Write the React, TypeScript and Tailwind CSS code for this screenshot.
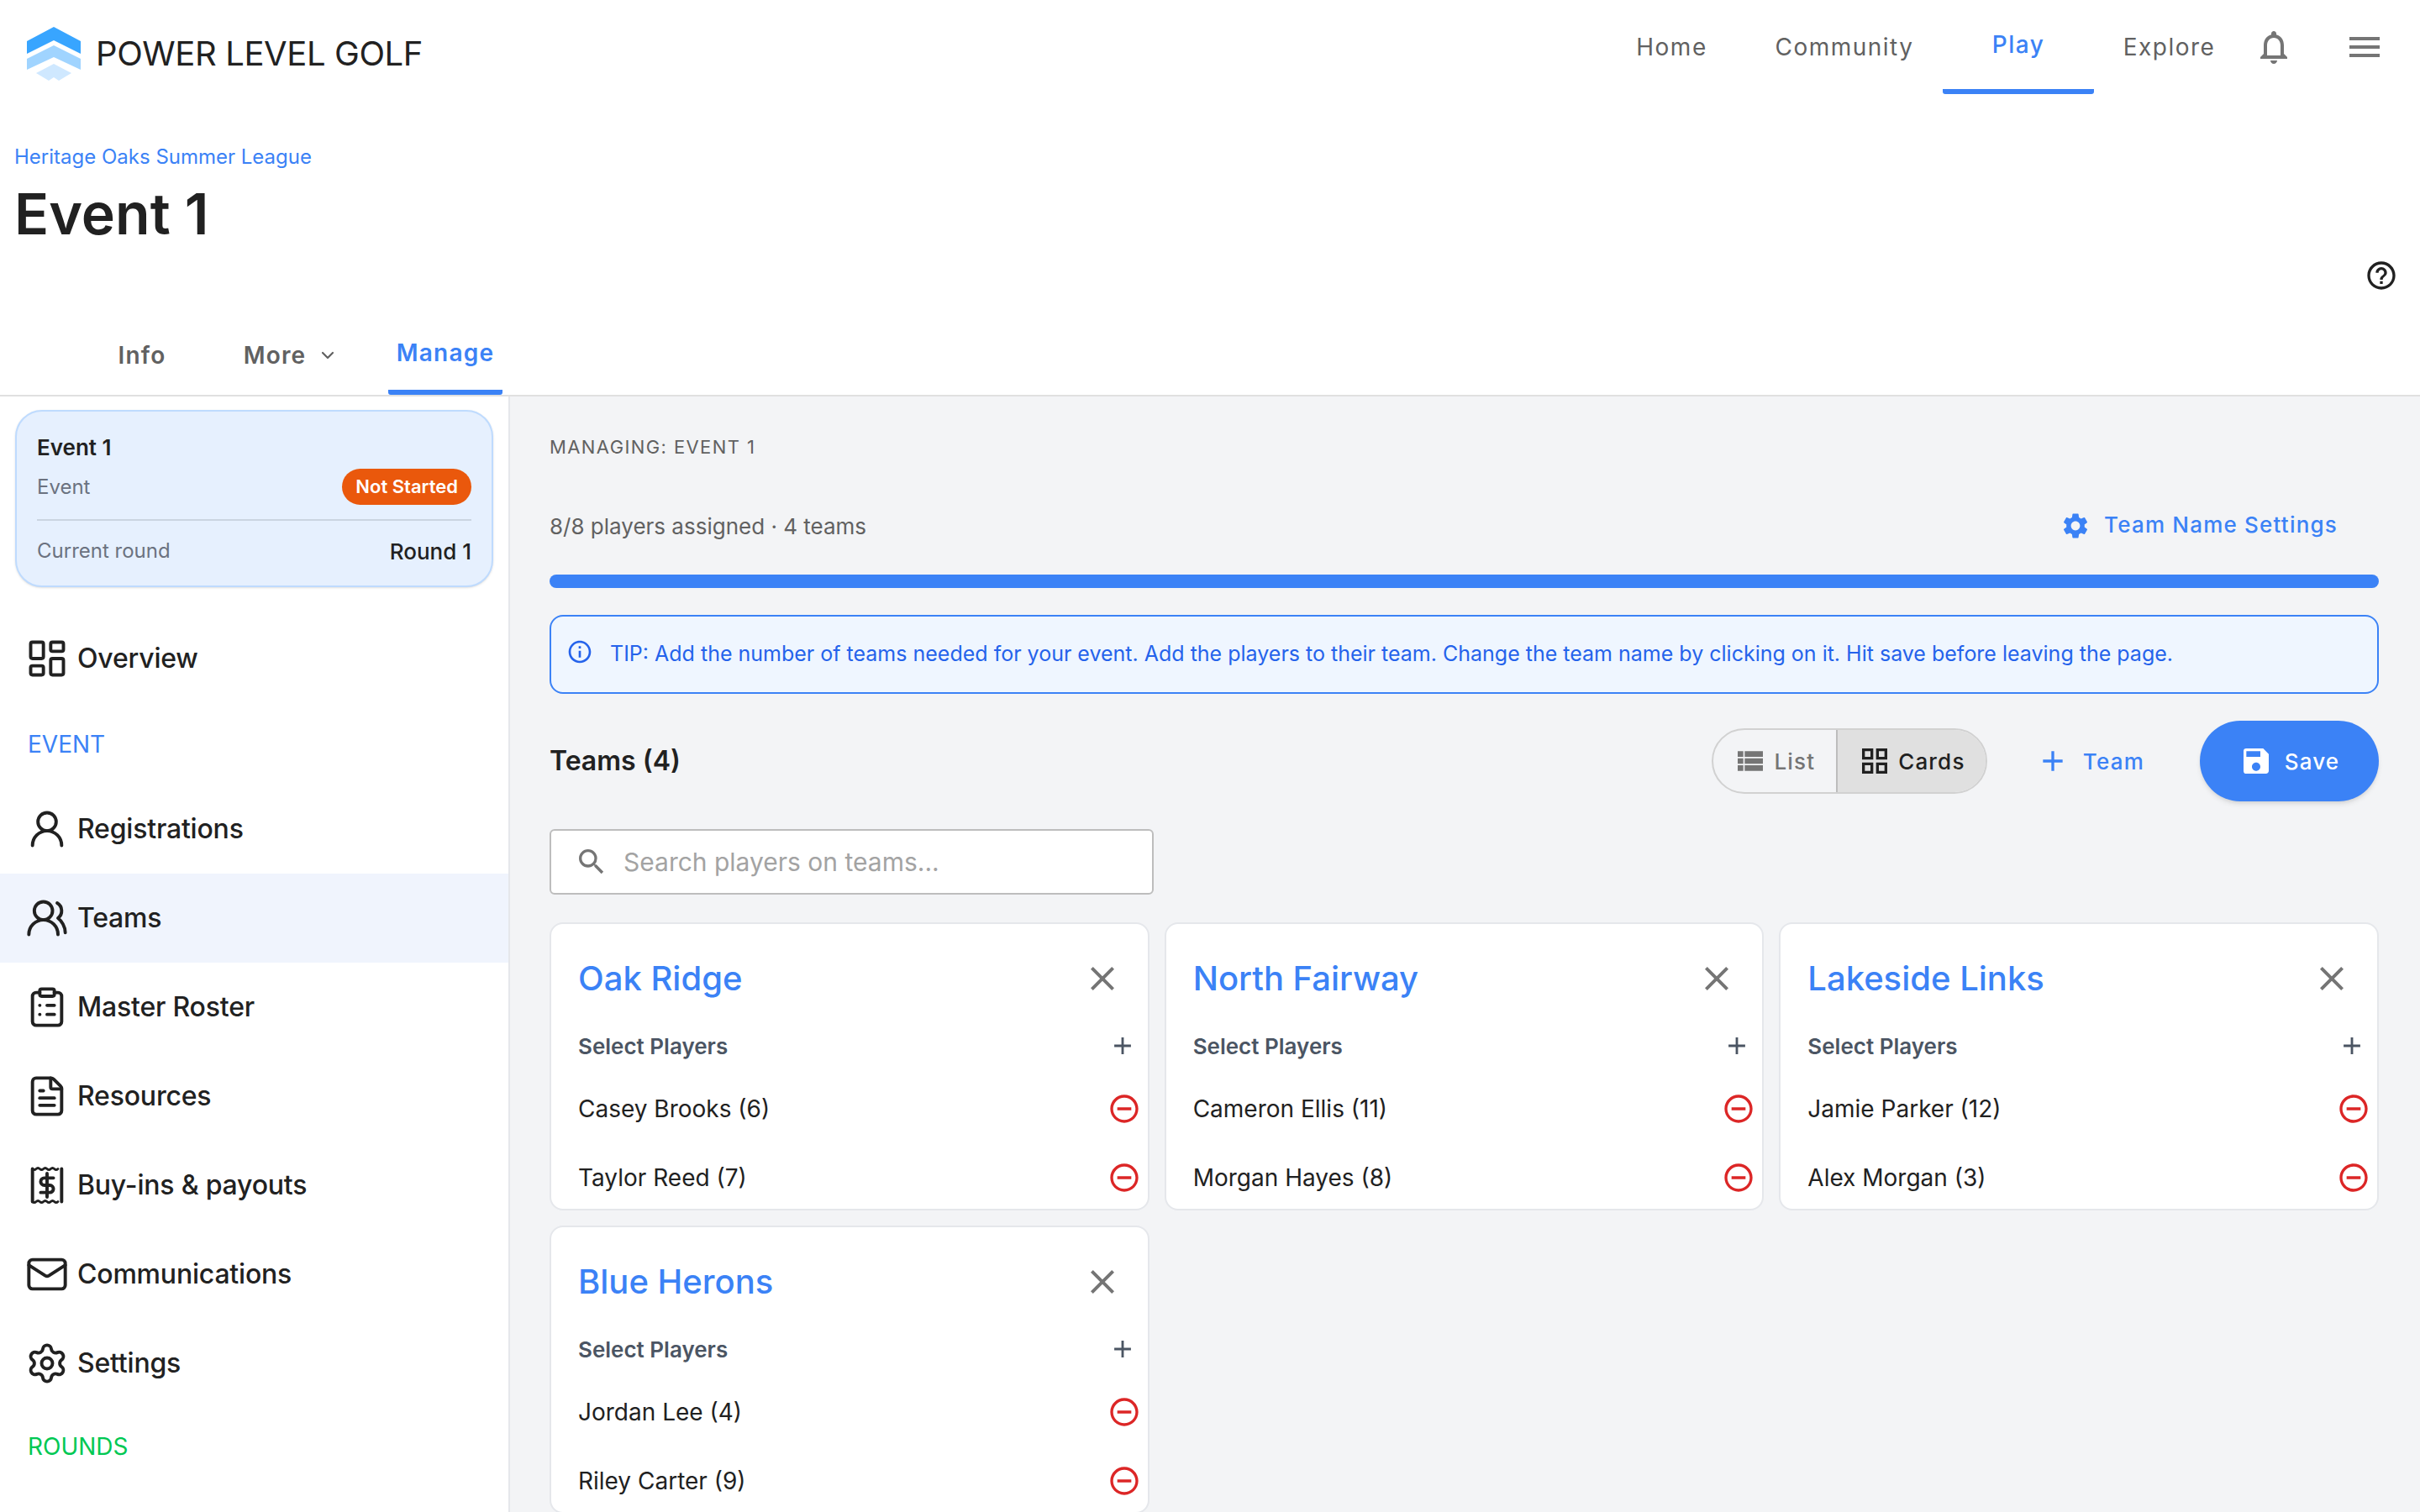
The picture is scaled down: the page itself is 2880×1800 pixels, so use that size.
import React from "react";
import {
  ChevronDown,
  ClipboardList,
  FileText,
  LayoutDashboard,
  Mail,
  Settings,
  UserRound,
  UsersRound,
} from "lucide-react";
import {
  MdAdd,
  MdClose,
  MdGridView,
  MdHelpOutline,
  MdInfoOutline,
  MdMenu,
  MdNotificationsNone,
  MdRemoveCircleOutline,
  MdSave,
  MdSearch,
  MdSettings,
  MdViewList,
} from "react-icons/md";

const teams = [
  { name: "Oak Ridge", players: ["Casey Brooks (6)", "Taylor Reed (7)"] },
  { name: "North Fairway", players: ["Cameron Ellis (11)", "Morgan Hayes (8)"] },
  { name: "Lakeside Links", players: ["Jamie Parker (12)", "Alex Morgan (3)"] },
  { name: "Blue Herons", players: ["Jordan Lee (4)", "Riley Carter (9)"] },
];

function Logo() {
  return (
    <svg width="64" height="64" viewBox="0 0 64 64" className="shrink-0">
      <polygon points="32,0 64,17 64,32 32,16 0,32 0,17" fill="#38a5ff" />
      <polygon points="32,22 64,38 64,51 32,36 0,51 0,38" fill="#a0d4ff" />
      <polygon points="32,44 53,55 38,64 32,60 26,64 11,55" fill="#cfe8ff" />
    </svg>
  );
}

function ReceiptIcon() {
  return (
    <svg width="52" height="52" viewBox="0 0 24 24" fill="none" stroke="currentColor" strokeWidth="1.8" strokeLinejoin="round" strokeLinecap="round">
      <path d="M4 3v18M20 3v18" />
      <path d="M4 3q1 1 2 0t2 0 2 0 2 0 2 0 2 0 2 0" strokeWidth="1.3" />
      <path d="M4 21q1 1 2 0t2 0 2 0 2 0 2 0 2 0 2 0" strokeWidth="1.3" />
      <path d="M12 5.5v13M15.5 8H10.5a2 2 0 0 0 0 4h3a2 2 0 0 1 0 4H8.5" />
    </svg>
  );
}

function SideItem({ icon, label, active }: { icon: React.ReactNode; label: string; active?: boolean }) {
  return (
    <div className={`h-[106px] flex items-center pl-[30px] gap-[10px] ${active ? "bg-[#f0f4fd]" : ""}`}>
      <div className="w-[52px] flex justify-center shrink-0">{icon}</div>
      <span className="text-[32px] font-medium text-[#212121] tracking-[-0.2px]">{label}</span>
    </div>
  );
}

function TeamCard({ name, players }: { name: string; players: string[] }) {
  return (
    <div className="h-[343px] overflow-hidden bg-white border-2 border-[#e5e7eb] rounded-[16px] pl-[32px] pr-[8px] pt-[32px]">
      <div className="h-[66px] flex items-center justify-between">
        <span className="text-[40px] font-medium text-[#3b82f6]">{name}</span>
        <MdClose size={48} className="text-[#757575] mr-[22px]" />
      </div>
      <div className="mt-[22px] h-[50px] flex items-center justify-between">
        <span className="text-[26px] font-semibold text-[#4b5563]">Select Players</span>
        <MdAdd size={34} className="text-[#4b5563] mr-[5px]" />
      </div>
      <div className="mt-[9px] flex flex-col">
        {players.map((p) => (
          <div key={p} className="h-[82px] flex items-center justify-between">
            <span className="text-[28px] text-[#212121]">{p}</span>
            <MdRemoveCircleOutline size={40} className="text-[#dc2626]" />
          </div>
        ))}
      </div>
    </div>
  );
}

export default function App() {
  return (
    <div className="h-[1800px] overflow-hidden flex flex-col bg-white font-['Inter',sans-serif]">
      {/* top bar */}
      <header className="h-[112px] shrink-0 flex items-stretch justify-between pl-[32px] pr-[42px]">
        <div className="flex items-start pt-[32px] gap-[18px]">
          <Logo />
          <span className="text-[40px] leading-[64px] text-[#212121] tracking-[-0.4px]">POWER LEVEL GOLF</span>
        </div>
        <nav className="flex items-stretch text-[28px] text-[#616161] tracking-[1.5px]">
          <div className="w-[177px] flex items-center justify-center">Home</div>
          <div className="w-[234px] flex items-center justify-center">Community</div>
          <div className="w-[180px] flex items-center justify-center font-medium text-[#3b82f6] border-b-[6px] border-[#3b82f6] rounded-b-[3px]">Play</div>
          <div className="w-[179px] flex items-center justify-center">Explore</div>
          <div className="ml-[11px] flex items-center">
            <MdNotificationsNone size={48} className="text-[#757575]" />
          </div>
          <div className="ml-[60px] flex items-center">
            <MdMenu size={48} className="text-[#757575]" />
          </div>
        </nav>
      </header>

      {/* event title */}
      <div className="h-[264px] shrink-0 flex justify-between pl-[17px] pr-[26px] pt-[58px]">
        <div>
          <div className="text-[24px] leading-[34px] text-[#3b82f6]">Heritage Oaks Summer League</div>
          <h1 className="mt-[10px] text-[68px] leading-[80px] font-semibold text-[#212121]">Event 1</h1>
        </div>
        <div className="pt-[138px]">
          <MdHelpOutline size={40} className="text-[#212121]" />
        </div>
      </div>

      {/* tabs */}
      <div className="h-[96px] shrink-0 flex items-stretch pl-[108px] border-b-2 border-[#e0e0e0] text-[28px] font-semibold tracking-[1.2px] text-[#616161]">
        <div className="w-[122px] flex items-center justify-center">Info</div>
        <div className="w-[232px] flex items-center justify-center gap-[14px]">
          More
          <ChevronDown size={24} strokeWidth={2.2} />
        </div>
        <div className="w-[136px] flex items-center justify-center text-[#3b82f6] border-b-[6px] border-[#3b82f6] rounded-b-[3px]">Manage</div>
      </div>

      <div className="flex-1 min-h-0 flex">
        {/* sidebar */}
        <aside className="w-[607px] shrink-0 border-r-2 border-[#e5e7eb] bg-white pt-[16px]">
          <div className="mx-[18px] h-[211px] rounded-[32px] border-2 border-[#bfdbfe] bg-[#e6f0fe] px-[24px] pt-[30px] shadow-sm">
            <div className="text-[26px] leading-[26px] font-semibold text-[#212121]">Event 1</div>
            <div className="mt-[12px] h-[43px] flex items-center justify-between">
              <span className="text-[24px] text-[#6b7280]">Event</span>
              <span className="h-[43px] px-[16px] flex items-center rounded-full bg-[#ea580c] text-white text-[22px] font-semibold">Not Started</span>
            </div>
            <div className="mt-[17px] h-[2px] bg-[#cbd5e1]" />
            <div className="mt-[22px] h-[28px] flex items-center justify-between">
              <span className="text-[24px] text-[#6b7280]">Current round</span>
              <span className="text-[26px] font-medium text-[#212121]">Round 1</span>
            </div>
          </div>

          <div className="mt-[32px]">
            <SideItem icon={<LayoutDashboard size={52} strokeWidth={1.8} className="text-[#212121]" />} label="Overview" />
            <div className="h-[97px] flex items-center pl-[33px] text-[28px] text-[#3b82f6]">EVENT</div>
            <SideItem icon={<UserRound size={52} strokeWidth={1.8} className="text-[#212121]" />} label="Registrations" />
            <SideItem icon={<UsersRound size={52} strokeWidth={1.8} className="text-[#212121]" />} label="Teams" active />
            <SideItem icon={<ClipboardList size={52} strokeWidth={1.8} className="text-[#212121]" />} label="Master Roster" />
            <SideItem icon={<FileText size={52} strokeWidth={1.8} className="text-[#212121]" />} label="Resources" />
            <SideItem icon={<span className="text-[#212121]"><ReceiptIcon /></span>} label="Buy-ins & payouts" />
            <SideItem icon={<Mail size={52} strokeWidth={1.8} className="text-[#212121]" />} label="Communications" />
            <SideItem icon={<Settings size={52} strokeWidth={1.8} className="text-[#212121]" />} label="Settings" />
            <div className="h-[92px] flex items-center pl-[33px] text-[28px] text-[#00c853]">ROUNDS</div>
          </div>
        </aside>

        {/* main */}
        <main className="flex-1 min-w-0 bg-[#f3f4f6] pl-[47px] pr-[49px] pt-[46px]">
          <div className="text-[22px] leading-[28px] tracking-[1.4px] text-[#616161]">MANAGING: EVENT 1</div>

          <div className="mt-[50px] h-[60px] flex items-center justify-between">
            <span className="text-[26px] text-[#616161]">8/8 players assigned · 4 teams</span>
            <div className="flex items-center gap-[16px] pr-[49px] text-[#3b82f6]">
              <MdSettings size={36} />
              <span className="text-[26px] font-medium tracking-[1.2px] -mt-[4px]">Team Name Settings</span>
            </div>
          </div>

          <div className="mt-[28px] h-[16px] rounded-full bg-[#3b82f6]" />

          <div className="mt-[32px] h-[94px] rounded-[16px] border-2 border-[#3b82f6] bg-[#eff6ff] flex items-center pl-[18px] gap-[20px] text-[#2563eb]">
            <MdInfoOutline size={32} className="-mt-[6px] shrink-0" />
            <span className="text-[25px]">TIP: Add the number of teams needed for your event. Add the players to their team. Change the team name by clicking on it. Hit save before leaving the page.</span>
          </div>

          <div className="mt-[32px] h-[96px] flex items-center">
            <span className="text-[32px] font-semibold text-[#212121]">Teams (4)</span>
            <div className="ml-auto h-[78px] flex rounded-full border-2 border-[#d1d1d1] overflow-hidden text-[26px] tracking-[1.2px] font-medium">
              <div className="w-[146px] flex items-center justify-center gap-[8px] text-[#757575]">
                <MdViewList size={40} />
                List
              </div>
              <div className="w-[178px] flex items-center justify-center gap-[8px] bg-[#e0e0e0] border-l-2 border-[#bdbdbd] text-[#212121]">
                <MdGridView size={40} />
                Cards
              </div>
            </div>
            <div className="ml-[58px] flex items-center gap-[16px] text-[#3b82f6] text-[26px] font-medium tracking-[1.2px]">
              <MdAdd size={40} />
              Team
            </div>
            <div className="ml-[66px] w-[213px] h-[96px] rounded-full bg-[#3b82f6] text-white shadow-md flex items-center justify-center gap-[14px] text-[26px] font-medium tracking-[1.2px]">
              <MdSave size={40} />
              Save
            </div>
          </div>

          <div className="mt-[33px] w-[719px] h-[78px] rounded-[6px] border-2 border-[#bdbdbd] bg-white flex items-center pl-[28px] gap-[18px]">
            <MdSearch size={40} className="text-[#757575]" />
            <span className="text-[30px] text-[#a3a3a3]">Search players on teams...</span>
          </div>

          <div className="mt-[33px] grid grid-cols-3 gap-[18px]">
            {teams.map((t) => (
              <TeamCard key={t.name} name={t.name} players={t.players} />
            ))}
          </div>
        </main>
      </div>
    </div>
  );
}
